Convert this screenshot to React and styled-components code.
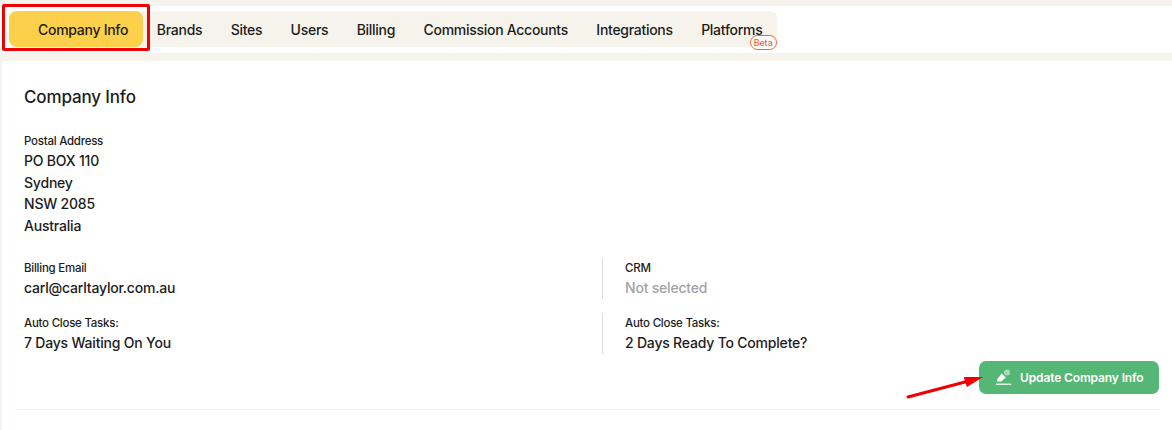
import React from 'react';
import styled, { createGlobalStyle } from 'styled-components';

const GlobalStyle = createGlobalStyle`
    html, body {
        margin: 0;
        padding: 0;
        background: #f6f3ec;
    }
    body {
        font-family: Inter, "Liberation Sans", sans-serif;
        color: #1c1c1c;
    }
`
const Page = styled.div`
    position: relative;
    width: 1172px;
    height: 430px;
    overflow: hidden;
    padding-top: 6px;
    box-sizing: border-box;
`
const TopBar = styled.div`
    height: 47px;
    background: #fff;
    padding: 5px 0 0 9px;
    box-sizing: border-box;
`
const Tabs = styled.div`
    display: inline-flex;
    height: 36px;
    background: #f6f3ec;
    border-radius: 8px;
`
const Tab = styled.div`
    position: relative;
    display: flex;
    align-items: center;
    padding: ${p => (p.$active ? '0 14.5px 0 29px' : '0 14.2px')};
    font-size: 14px;
    font-weight: 500;
    letter-spacing: -0.28px;
    white-space: nowrap;
    border-radius: 8px;
    background: ${p => (p.$active ? '#fcd04b' : 'transparent')};
`
const Beta = styled.span`
    position: absolute;
    right: 0;
    bottom: -3px;
    width: 27px;
    height: 15px;
    box-sizing: border-box;
    border: 1px solid #f2622e;
    border-radius: 8px;
    background: #fff;
    color: #f2622e;
    font-size: 9px;
    font-weight: 500;
    line-height: 13px;
    letter-spacing: -0.1px;
    text-align: center;
`
const Card = styled.div`
    margin: 8px 0 0 2px;
    height: 369px;
    background: #fff;
    border-radius: 4px 0 0 0;
    padding: 26px 13px 0 22px;
    box-sizing: border-box;
`
const Title = styled.h2`
    margin: 0 0 27px;
    font-size: 17px;
    line-height: 20px;
    font-weight: 500;
    letter-spacing: -0.15px;
`
const Label = styled.div`
    font-size: 11.5px;
    line-height: 15px;
    font-weight: 500;
    letter-spacing: -0.25px;
    margin-bottom: 1px;
`
const Value = styled.div`
    font-size: 14px;
    line-height: 21.6px;
    font-weight: 500;
    letter-spacing: -0.2px;
    color: ${p => (p.$muted ? '#a3a3a3' : '#1c1c1c')};
`
const Address = styled.div`
    margin-bottom: 22px;
`
const Row = styled.div`
    display: grid;
    grid-template-columns: 578px 1fr;
    height: 40px;
    margin-bottom: 15px;
`
const Cell = styled.div`
    padding-top: 3px;
    ${p => p.$divided && 'border-left: 1px solid #dcdcdc; padding-left: 22px;'}
`
const Actions = styled.div`
    display: flex;
    justify-content: flex-end;
    margin: -7px 0 0 -6px;
    padding-bottom: 15px;
    border-bottom: 1px solid #f0f0f0;
`
const UpdateButton = styled.button`
    display: flex;
    align-items: center;
    gap: 8px;
    width: 180px;
    height: 33px;
    padding: 0 0 0 17px;
    box-sizing: border-box;
    border: 0;
    border-radius: 7px;
    background: #55b776;
    color: #fff;
    font-family: inherit;
    font-size: 12px;
    font-weight: 600;
    letter-spacing: -0.13px;
    white-space: nowrap;
`
const Highlight = styled.div`
    position: absolute;
    left: 2px;
    top: 4px;
    width: 148px;
    height: 47px;
    box-sizing: border-box;
    border: 3px solid #f00000;
    border-radius: 2px;
    pointer-events: none;
`
const Arrow = styled.svg`
    position: absolute;
    left: 905px;
    top: 372px;
`

const tabs = ['Brands', 'Sites', 'Users', 'Billing', 'Commission Accounts', 'Integrations']

const PenIcon = () => (
    <svg width="16" height="17" viewBox="0 0 16 17">
        <circle cx="11" cy="3.4" r="3" fill="#a5dcb8" />
        <path d="M5.7 4.6 L9.8 8.6 L5.2 12.6 L1 12.4 L1.2 10.2 Z" fill="#fff" />
        <rect x="-0.2" y="14.6" width="15.4" height="1.2" fill="#fff" />
    </svg>
)

export default function App() {
    return (
        <Page>
            <GlobalStyle />
            <TopBar>
                <Tabs>
                    <Tab $active>Company Info</Tab>
                    {tabs.map(tab => <Tab key={tab}>{tab}</Tab>)}
                    <Tab>Platforms<Beta>Beta</Beta></Tab>
                </Tabs>
            </TopBar>
            <Card>
                <Title>Company Info</Title>
                <Address>
                    <Label>Postal Address</Label>
                    <Value>PO BOX 110</Value>
                    <Value>Sydney</Value>
                    <Value>NSW 2085</Value>
                    <Value>Australia</Value>
                </Address>
                <Row>
                    <Cell>
                        <Label>Billing Email</Label>
                        <Value>carl@carltaylor.com.au</Value>
                    </Cell>
                    <Cell $divided>
                        <Label>CRM</Label>
                        <Value $muted>Not selected</Value>
                    </Cell>
                </Row>
                <Row>
                    <Cell>
                        <Label>Auto Close Tasks:</Label>
                        <Value>7 Days Waiting On You</Value>
                    </Cell>
                    <Cell $divided>
                        <Label>Auto Close Tasks:</Label>
                        <Value>2 Days Ready To Complete?</Value>
                    </Cell>
                </Row>
                <Actions>
                    <UpdateButton><PenIcon />Update Company Info</UpdateButton>
                </Actions>
            </Card>
            <Highlight />
            <Arrow width="80" height="30" viewBox="0 0 80 30">
                <path d="M3 25 L60 10" stroke="#f00000" strokeWidth="3" strokeLinecap="round" />
                <path d="M78 5 L59 5 L60 10 L62 15 Z" fill="#f00000" />
            </Arrow>
        </Page>
    )
}
